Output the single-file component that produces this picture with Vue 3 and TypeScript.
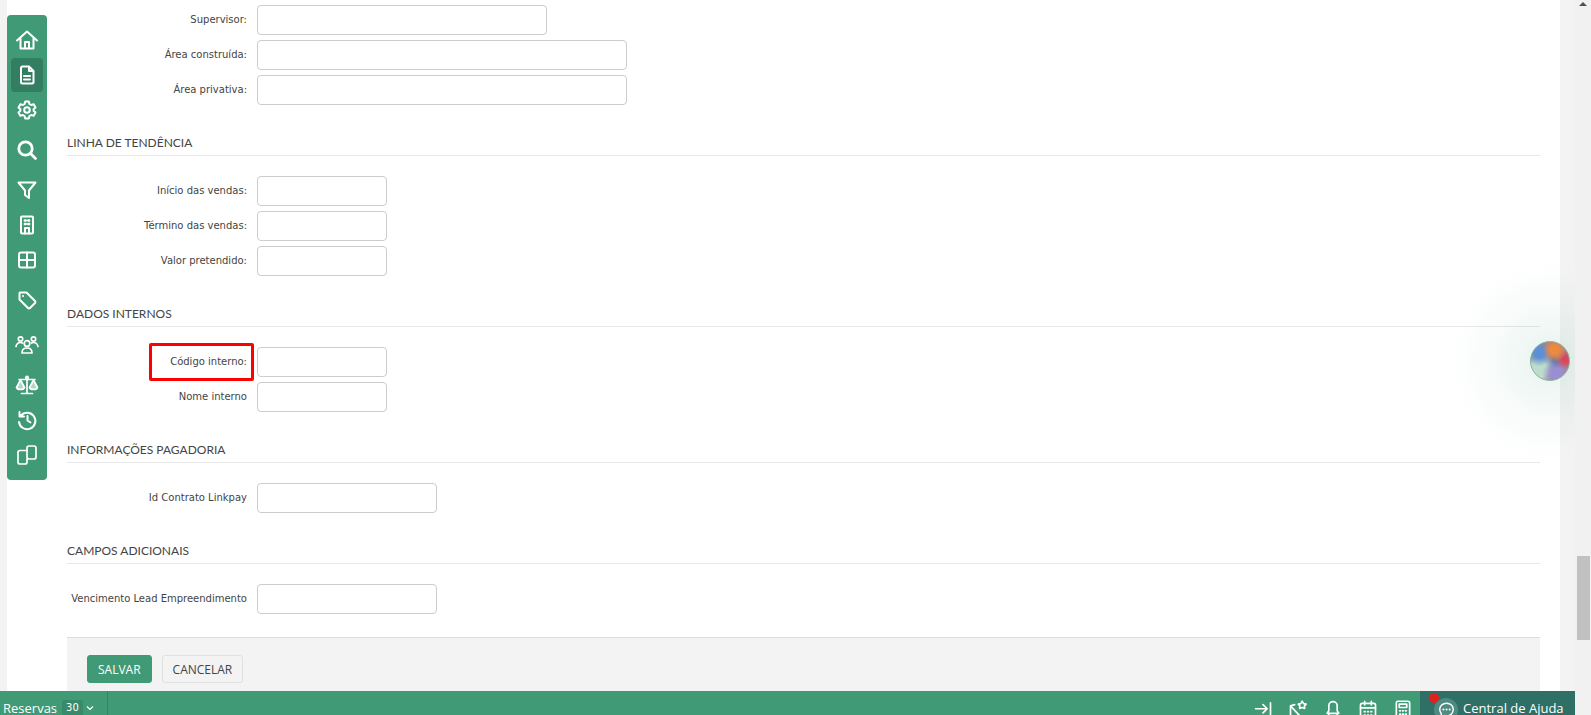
<script setup lang="ts">
interface Field {
  label: string
  size: 'sm' | 'md' | 'lg' | 'xl'
  marked?: boolean
}

interface Section {
  title?: string
  fields: Field[]
}

const sections: Section[] = [
  {
    fields: [
      { label: 'Supervisor:', size: 'lg' },
      { label: 'Área construída:', size: 'xl' },
      { label: 'Área privativa:', size: 'xl' }
    ]
  },
  {
    title: 'Linha de tendência',
    fields: [
      { label: 'Início das vendas:', size: 'sm' },
      { label: 'Término das vendas:', size: 'sm' },
      { label: 'Valor pretendido:', size: 'sm' }
    ]
  },
  {
    title: 'Dados internos',
    fields: [
      { label: 'Código interno:', size: 'sm', marked: true },
      { label: 'Nome interno', size: 'sm' }
    ]
  },
  {
    title: 'Informações pagadoria',
    fields: [{ label: 'Id Contrato Linkpay', size: 'md' }]
  },
  {
    title: 'Campos adicionais',
    fields: [{ label: 'Vencimento Lead Empreendimento', size: 'md' }]
  }
]
</script>

<template>
  <div class="page">
    <nav class="sidebar">
      <a class="nav-item">
        <svg viewBox="0 0 24 24"><path d="M2 12.500 12 3.500l10 9M5.500 10.500V20.500h13V10.500M10 20.500v-6.500h4v6.500" /></svg>
      </a>
      <a class="nav-item active">
        <svg viewBox="0 0 24 24"><path d="M7.500 3.500H14l4.500 4.500v11a1.500 1.500 0 0 1-1.500 1.500H7.500A1.500 1.500 0 0 1 6 19V5a1.500 1.500 0 0 1 1.500-1.500ZM14 3.500V8h4.500M9 13h6M9 16.500h6" /></svg>
      </a>
      <a class="nav-item">
        <svg viewBox="0 0 24 24"><path d="M10.200 3.500h3.600l.6 2.500 1.800 1 2.500-.7 1.800 3.100-1.900 1.800v1.600l1.900 1.800-1.800 3.100-2.500-.7-1.800 1-.6 2.500h-3.600l-.6-2.500-1.800-1-2.500.7-1.800-3.100 1.900-1.800v-1.600L3.500 9.400l1.800-3.100 2.500.7 1.800-1Z" /><circle cx="12" cy="12" r="2.800" /></svg>
      </a>
      <a class="nav-item">
        <svg viewBox="0 0 24 24" class="bold"><circle cx="10.500" cy="10.500" r="6.700" /><path d="m15.500 15.500 5 5" /></svg>
      </a>
      <a class="nav-item">
        <svg viewBox="0 0 24 24"><path d="M3.500 4.500h17l-6.500 8v7.500l-4-3v-4.500Z" /></svg>
      </a>
      <a class="nav-item">
        <svg viewBox="0 0 24 24"><rect x="6" y="3.500" width="12" height="17" rx="1" /><path class="heavy" d="M9.800 7.500h1M13.200 7.500h1M9.800 11h1M13.200 11h1" /><path d="M10 20.500v-5.500h4v5.500" /></svg>
      </a>
      <a class="nav-item">
        <svg viewBox="0 0 24 24"><rect x="4" y="4.500" width="16" height="15" rx="2" /><path d="M4 12h16M12 4.500v15" /></svg>
      </a>
      <a class="nav-item">
        <svg viewBox="0 0 24 24"><path d="M5 4.500h6.500l8.500 8.500a1.400 1.400 0 0 1 0 2l-5 5a1.400 1.400 0 0 1-2 0L4.500 11.500V5ZM8 8h.1" /></svg>
      </a>
      <a class="nav-item">
        <svg viewBox="0 0 24 24" class="thin"><circle cx="12" cy="10.500" r="2.800" /><circle cx="5.500" cy="6" r="2.200" /><circle cx="18.500" cy="6" r="2.200" /><path d="M7 20c0-3 2-5 5-5s5 2 5 5ZM1 13.500c.5-2.500 2.200-4 4.500-4 .8 0 1.500.2 2 .5M23 13.500c-.5-2.500-2.200-4-4.500-4-.8 0-1.500.2-2 .5" /></svg>
      </a>
      <a class="nav-item">
        <svg viewBox="0 0 24 24" class="thin"><circle cx="12" cy="4.500" r="1.200" /><path d="M12 6v14M6.500 20.500h11M4 6.500h16" /><path class="filled" d="M5.500 7 1.500 14.500c.5 2.500 7.500 2.500 8 0ZM18.500 7l-4 7.500c.5 2.500 7.500 2.500 8 0Z" /></svg>
      </a>
      <a class="nav-item">
        <svg viewBox="0 0 24 24"><path d="M6 7.500A8.200 8.200 0 1 1 4 14M4.500 4v4.500H9M12.500 8v4.500l3 2" /></svg>
      </a>
      <a class="nav-item">
        <svg viewBox="0 0 24 24" class="thin"><rect x="12" y="3" width="9" height="13" rx="2" /><path d="M12 7.500H5a2 2 0 0 0-2 2V19a2 2 0 0 0 2 2h5a2 2 0 0 0 2-2v-3" /></svg>
      </a>
    </nav>

    <main class="content">
      <section v-for="(section, i) in sections" :key="i" class="section">
        <h3 v-if="section.title" class="section-title">{{ section.title }}</h3>
        <div class="rows">
          <div v-for="field in section.fields" :key="field.label" class="row">
            <label class="label" :class="{ marked: field.marked }">{{ field.label }}</label>
            <input class="input" :class="field.size" type="text" />
          </div>
        </div>
      </section>
      <div class="actions">
        <button class="btn primary" type="button">SALVAR</button>
        <button class="btn" type="button">CANCELAR</button>
      </div>
    </main>

    <div class="scroll-gutter"></div>

    <div class="orb-glow"></div>
    <div class="orb"></div>

    <div class="scrollbar">
      <span class="scroll-arrow"></span>
      <span class="scroll-thumb"></span>
    </div>

    <footer class="bottom-bar">
      <div class="reservas">
        <span>Reservas</span>
        <span class="count">30</span>
        <svg viewBox="0 0 10 10" class="chevron"><path d="m2 3.500 3 3 3-3" /></svg>
      </div>
      <div class="bar-icons">
        <svg viewBox="0 0 24 24"><path d="M3 10.500h14M12 5.500l5 5-5 5M21 3.500v18" /></svg>
        <svg viewBox="0 0 24 24"><path d="M3 22V7l5-1.500M3 7l13 14M17 1.500l1.700 2.800 3 .6-2 2.300.4 3-3.100-1.200-3.100 1.200.4-3-2-2.300 3-.6Z" /></svg>
        <svg viewBox="0 0 24 24"><path d="M12 2a5 5 0 0 0-5 5v6l-2 3h14l-2-3V7a5 5 0 0 0-5-5ZM7 16v5h10v-5" /></svg>
        <svg viewBox="0 0 24 24"><rect x="3" y="4" width="18" height="19" rx="2" /><path d="M3 9.500h18M8 1.500V6M16 1.500V6M7.500 14h1M11.500 14h1M15.500 14h1M7.500 18h1M11.500 18h1M15.500 18h1" /></svg>
        <svg viewBox="0 0 24 24"><rect x="4" y="1.500" width="16" height="22" rx="2" /><rect x="7.500" y="5" width="9" height="4" /><path d="M8 13h1M11.500 13h1M15 13h1M8 17h1M11.500 17h1M15 17h1" /></svg>
      </div>
      <div class="help">
        <span class="help-icon">
          <svg viewBox="0 0 24 24"><path d="M12 4c-5 0-8.500 3.500-8.500 8 0 2 .8 3.800 2 5L5 21l4-1.500c1 .3 2 .5 3 .5 5 0 8.500-3.500 8.500-8S17 4 12 4Z" /><path class="dots" d="M8 12h.1M12 12h.1M16 12h.1" /></svg>
        </span>
        <span class="help-dot"></span>
        <span>Central de Ajuda</span>
      </div>
    </footer>
  </div>
</template>

<style scoped>
.page {
  position: relative;
  height: 715px;
  overflow: hidden;
  box-sizing: border-box;
  padding: 0 51px 0 7px;
  background: #fff;
  font-family: "DejaVu Sans", sans-serif;
}

.page::before {
  content: "";
  position: absolute;
  left: 0;
  top: 0;
  bottom: 0;
  width: 7px;
  background: #f3f3f3;
}

/* ── Sidebar ── */
.sidebar {
  position: absolute;
  left: 7px;
  top: 15px;
  width: 40px;
  height: 465px;
  box-sizing: border-box;
  padding-top: 8px;
  background: #409a76;
  border-radius: 4px;
  display: flex;
  flex-direction: column;
  align-items: center;
}

.nav-item {
  flex: none;
  width: 32px;
  height: 34px;
  margin-top: 1px;
  display: flex;
  align-items: center;
  justify-content: center;
  border-radius: 4px;
}

/* the icon column is not evenly spaced */
.nav-item:first-child { margin-top: 0; }
.nav-item:nth-child(4),
.nav-item:nth-child(5),
.nav-item:nth-child(8),
.nav-item:nth-child(10) { margin-top: 6px; }
.nav-item:nth-child(9) { margin-top: 11px; }

.nav-item.active {
  background: #337e62;
}

.nav-item svg {
  width: 24px;
  height: 24px;
  fill: none;
  stroke: #fff;
  stroke-width: 2;
  stroke-linecap: round;
  stroke-linejoin: round;
}

.nav-item svg.bold {
  stroke-width: 2.800;
}

.nav-item svg.thin {
  stroke-width: 1.700;
}

.nav-item .filled {
  fill: rgba(255, 255, 255, 0.6);
}

.nav-item .heavy {
  stroke-width: 2.400;
}

/* ── Form ── */
.content {
  margin-left: 60px;
  width: 1473px;
  padding-top: 5px;
}

.section {
  margin-bottom: 27px;
}

.section:last-of-type {
  margin-bottom: 23px;
}

.section-title {
  box-sizing: border-box;
  margin: 0 0 20px;
  height: 24px;
  line-height: 22px;
  font-family: Lato, sans-serif;
  font-size: 12px;
  font-weight: 400;
  color: #444;
  text-transform: uppercase;
  border-bottom: 1px solid #e8e8e8;
}

.rows {
  display: flex;
  flex-direction: column;
  gap: 5px;
}

.row {
  display: flex;
  height: 30px;
}

.label {
  position: relative;
  width: 180px;
  flex: none;
  text-align: right;
  font-size: 10px;
  line-height: 30px;
  color: #444;
}

.label.marked::after {
  content: "";
  position: absolute;
  left: 82px;
  top: -4px;
  width: 99px;
  height: 32px;
  border: 3px solid #f00;
  border-radius: 2px;
  pointer-events: none;
}

.input {
  box-sizing: border-box;
  height: 30px;
  margin-left: 10px;
  border: 1px solid #ccc;
  border-radius: 4px;
  background: #fff;
  outline: none;
}

.input.sm { width: 130px; }
.input.md { width: 180px; }
.input.lg { width: 290px; }
.input.xl { width: 370px; }

/* ── Footer actions ── */
.actions {
  display: flex;
  gap: 10px;
  height: 55px;
  box-sizing: border-box;
  padding: 17px 20px 0;
  background: #f3f3f3;
  border-top: 1px solid #ddd;
}

.btn {
  height: 28px;
  padding: 0 10px;
  border: 1px solid #e0e0e0;
  border-radius: 3px;
  background: #f3f3f3;
  color: #444;
  font-family: "Open Sans", sans-serif;
  font-size: 12px;
}

.btn.primary {
  background: #409a76;
  border-color: #409a76;
  color: #fff;
}

/* ── Right column ── */
.scroll-gutter {
  position: absolute;
  left: 1560px;
  top: 0;
  bottom: 0;
  width: 15px;
  background: #f3f3f3;
}

.orb-glow {
  position: absolute;
  left: 1450px;
  top: 261px;
  width: 200px;
  height: 200px;
  border-radius: 50%;
  background: radial-gradient(circle, rgba(64, 154, 118, 0.12) 0%, rgba(64, 154, 118, 0.04) 40%, rgba(64, 154, 118, 0) 70%);
}

.orb {
  position: absolute;
  left: 1530px;
  top: 341px;
  width: 40px;
  height: 40px;
  border-radius: 50%;
  border: 1px solid #8fb89a;
  box-sizing: border-box;
  background:
    radial-gradient(circle at 62% 20%, #ee8a3c 0 10%, transparent 32%),
    radial-gradient(circle at 90% 46%, #d8485c 0 7%, transparent 24%),
    radial-gradient(circle at 22% 28%, #5b8fd6 0 12%, transparent 34%),
    radial-gradient(circle at 68% 84%, #9a8ed2 0 12%, transparent 36%),
    radial-gradient(circle at 20% 72%, #bcdccc 0 20%, transparent 44%),
    radial-gradient(ellipse at 58% 60%, #4c6ea6 0 8%, transparent 30%),
    #a5808a;
}

.scrollbar {
  position: absolute;
  right: 0;
  top: 0;
  bottom: 0;
  width: 16px;
  background: #f1f1f1;
}

.scroll-arrow {
  position: absolute;
  left: 4px;
  top: 2px;
  border-left: 4px solid transparent;
  border-right: 4px solid transparent;
  border-bottom: 4px solid #505050;
}

.scroll-thumb {
  position: absolute;
  left: 2px;
  top: 556px;
  width: 13px;
  height: 84px;
  background: #c1c1c1;
}

/* ── Bottom bar ── */
.bottom-bar {
  position: absolute;
  left: 0;
  bottom: 0;
  width: 1575px;
  height: 24px;
  display: flex;
  background: #409a76;
  color: #fff;
}

.reservas {
  display: flex;
  align-items: center;
  gap: 5px;
  height: 100%;
  width: 108px;
  box-sizing: border-box;
  padding: 9px 0 0 3px;
  border-right: 1px solid #36846a;
  font-family: "Open Sans", sans-serif;
  font-size: 13px;
  line-height: 14px;
}

.count {
  padding: 1px 4px 0;
  border-radius: 3px 3px 0 0;
  background: #388a6a;
  font-family: "DejaVu Sans", sans-serif;
  font-size: 10px;
  line-height: 14px;
}

.chevron {
  width: 10px;
  height: 10px;
  margin-left: -3px;
  fill: none;
  stroke: #fff;
  stroke-width: 1.200;
}

.bar-icons {
  margin-left: auto;
  display: flex;
  gap: 15px;
  height: 100%;
  box-sizing: border-box;
  padding: 9px 7px 0 0;
}

.bar-icons svg {
  flex: none;
  width: 20px;
  height: 20px;
  fill: none;
  stroke: #fff;
  stroke-width: 2;
  stroke-linecap: round;
  stroke-linejoin: round;
}

.help {
  position: relative;
  display: flex;
  align-items: center;
  gap: 5px;
  width: 155px;
  height: 100%;
  box-sizing: border-box;
  padding: 10px 0 0 14px;
  background: #2f6f66;
  font-family: "Open Sans", sans-serif;
  font-size: 13px;
  line-height: 14px;
  white-space: nowrap;
}

.help-icon {
  width: 24px;
  height: 24px;
  margin-top: 3px;
  flex: none;
  border-radius: 50%;
  background: #4f8a82;
  display: flex;
  align-items: center;
  justify-content: center;
}

.help-icon svg {
  width: 19px;
  height: 19px;
  fill: none;
  stroke: #fff;
  stroke-width: 1.800;
  stroke-linecap: round;
  stroke-linejoin: round;
}

.help-icon .dots {
  stroke-width: 2.500;
}

.help-dot {
  position: absolute;
  left: 9px;
  top: 2px;
  width: 10px;
  height: 10px;
  border-radius: 50%;
  background: #e02020;
}
</style>

<style>
html, body {
  margin: 0;
  overflow: hidden;
}
</style>
